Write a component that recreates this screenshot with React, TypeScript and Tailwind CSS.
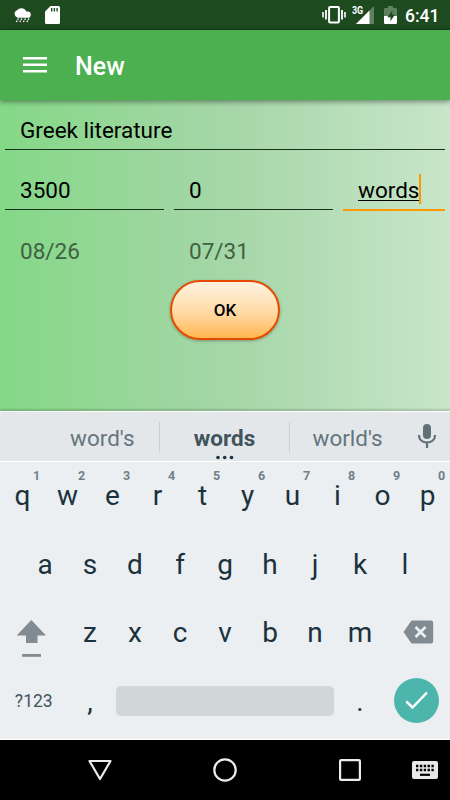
import type React from "react"

import { useState } from "react"

interface KeyProps {
  label: string
  hint?: string
}

const topRow = ["q", "w", "e", "r", "t", "y", "u", "i", "o", "p"]
const middleRow = ["a", "s", "d", "f", "g", "h", "j", "k", "l"]
const bottomRow = ["z", "x", "c", "v", "b", "n", "m"]

function StatusBar() {
  return (
    <div className="flex h-[30px] items-center border-b border-[#173d19] bg-[#1e4a20] text-white">
      <svg className="ml-[13px]" width="19" height="30" viewBox="0 0 19 30" fill="currentColor">
        <path d="M4.500 17.800a4 4 0 0 1-.3-7.600C5 9.300 5.900 8.200 8.300 8.200c2.700 0 4.500 1.500 5 3.400h1.400a3.100 3.100 0 0 1 0 6.200z" />
        <path d="M5.500 18.500l-2.200 3.500M9 18.500l-2.200 3.500M12.500 18.500l-2.200 3.500M16 18.500l-2.200 3.500" stroke="currentColor" strokeWidth="1.300" strokeDasharray="1.700 .7" />
      </svg>
      <svg className="ml-[13px]" width="15" height="30" viewBox="0 0 15 30">
        <path d="M5.500 6H13.500a1.500 1.500 0 0 1 1.500 1.500v15a1.500 1.500 0 0 1-1.500 1.500h-12A1.500 1.500 0 0 1 0 22.500V11.500z" fill="#fff" />
        <path d="M6.700 8v3.500M9.400 8v3.500M12.100 8v3.500" stroke="#1e4a20" strokeWidth="1.400" />
      </svg>
      <div className="ml-auto flex items-center">
        <svg width="24" height="30" viewBox="0 0 24 30" fill="none" stroke="currentColor">
          <rect x="7.100" y="7.100" width="9.800" height="15.300" rx="1" strokeWidth="2" />
          <path d="M4 10v9.500M20 10v9.500" strokeWidth="1.800" />
          <path d="M1 12v5.500M23 12v5.500" strokeWidth="1.600" />
        </svg>
        <div className="relative ml-[6px] h-[30px] w-[22px]">
          <svg width="22" height="30" viewBox="0 0 22 30">
            <path d="M22 6v18H4z" fill="#60815f" />
            <path d="M17.500 10.500V24H4z" fill="#fff" />
          </svg>
          <span className="absolute left-0 top-[5px] origin-left scale-x-[0.85] bg-[#1e4a20] text-[10.5px] font-bold leading-[11px]">
            3G
          </span>
        </div>
        <svg className="ml-[10px]" width="13" height="30" viewBox="0 0 13 30">
          <path d="M4 6h5v2h2.800A1.200 1.200 0 0 1 13 9.200V16H0V9.200A1.200 1.200 0 0 1 1.200 8H4z" fill="#60815f" />
          <path d="M0 16h13v6.800a1.200 1.200 0 0 1-1.200 1.200H1.200A1.200 1.200 0 0 1 0 22.800z" fill="#fff" />
          <path d="M8.500 10.500L3.200 17.200h3.300v4l4.500-6.700H8z" fill="#1e4a20" />
        </svg>
        <span className="ml-[8px] mr-[11px] w-[34px] whitespace-nowrap pt-[2px] text-[17.5px] font-medium leading-[28px]">6:41</span>
      </div>
    </div>
  )
}

function AppBar() {
  return (
    <header className="relative flex h-[70px] items-center bg-[#4caf50] pl-[23px] text-white shadow-[0_2px_5px_rgba(0,0,0,0.4)]">
      <svg width="24" height="18" viewBox="0 0 24 18" fill="currentColor">
        <path d="M0 1h24v2.500H0zM0 7.500h24V10H0zM0 14h24v2.500H0z" />
      </svg>
      <h1 className="ml-[28px] pt-[4px] text-[25px] font-medium leading-[30px]">New</h1>
    </header>
  )
}

function Field({ value, onChange, label }: { value: string; onChange: (value: string) => void; label: string }) {
  return (
    <input
      aria-label={label}
      className="block h-[35px] w-full min-w-0 border-b border-[#17301a] bg-transparent pb-[4px] pl-[15px] text-[22.5px] leading-[30px] text-black outline-none"
      value={value}
      onChange={(e) => onChange(e.target.value)}
    />
  )
}

function Key({ label, hint }: KeyProps) {
  return (
    <button type="button" className="relative h-full w-[45px] text-[28px] leading-[66px] text-[#1b323c]">
      {label}
      {hint && (
        <span className="absolute left-[27px] top-[6px] w-[19px] text-center text-[12.5px] font-bold leading-[15px] text-[#718086]">
          {hint}
        </span>
      )}
    </button>
  )
}

function KeyRow({ children }: { children: React.ReactNode }) {
  return <div className="flex h-[68.5px] justify-center">{children}</div>
}

function Suggestions() {
  return (
    <div className="flex h-[51px] items-center border-b border-t border-b-white border-t-white bg-[#e3e7ea] text-[22.5px] text-[#65757c]">
      <span className="w-[159px] pl-[70px] pt-[2px] leading-[30px]">word's</span>
      <div className="relative flex h-[30px] w-[131px] items-center justify-center border-x border-[#cbd0d3] font-bold text-[#41545c]">
        <span className="pt-[2px] leading-[30px]">words</span>
        <svg className="absolute left-[56px] top-[33px]" width="18" height="5" viewBox="0 0 18 5" fill="#1b323c">
          <circle cx="2" cy="2.500" r="1.800" />
          <circle cx="8.700" cy="2.500" r="1.800" />
          <circle cx="15.500" cy="2.500" r="1.800" />
        </svg>
      </div>
      <span className="ml-[22.5px] pt-[2px] leading-[30px]">world's</span>
      <svg className="-mt-px ml-auto mr-[13px]" width="20" height="26" viewBox="0 0 20 26">
        <rect x="6" y="1" width="8" height="15" rx="4" fill="#5f7077" />
        <path d="M2 12c0 4.700 3.500 7.500 8 7.500s8-2.800 8-7.500M10 19.500V25" fill="none" stroke="#5f7077" strokeWidth="2.200" />
      </svg>
    </div>
  )
}

function Keyboard() {
  return (
    <div className="relative bg-[#ebeff2] shadow-[0_-1px_3px_rgba(0,0,0,0.25)]">
      <Suggestions />
      <div className="h-[278px] border-b border-white">
        <KeyRow>
          {topRow.map((key, i) => (
            <Key key={key} label={key} hint={String((i + 1) % 10)} />
          ))}
        </KeyRow>
        <KeyRow>
          {middleRow.map((key) => (
            <Key key={key} label={key} />
          ))}
        </KeyRow>
        <KeyRow>
          <button type="button" aria-label="Shift" className="w-[67.5px] pl-[16px] pt-[10px]">
            <svg width="31" height="38" viewBox="0 0 31 38" fill="#808c91">
              <path d="M15.300 1L30 16.500h-8.500V24H10v-7.500H.7z" />
              <path d="M6 35h19v2.800H6z" />
            </svg>
          </button>
          {bottomRow.map((key) => (
            <Key key={key} label={key} />
          ))}
          <button type="button" aria-label="Delete" className="w-[67.5px] pb-[2px] pl-[20px]">
            <svg width="31" height="24" viewBox="0 0 31 24">
              <path d="M8.500 .5H28a2.200 2.200 0 0 1 2.200 2.200v18.600a2.200 2.200 0 0 1-2.200 2.200H8.500L.5 12z" fill="#808c91" />
              <path d="M12.500 7l10 10M22.500 7l-10 10" stroke="#ebeff2" strokeWidth="2.600" />
            </svg>
          </button>
        </KeyRow>
        <KeyRow>
          <button type="button" className="w-[67.5px] pb-[2px] text-[17.5px] leading-[66px] text-[#41545c]">
            ?123
          </button>
          <Key label="," />
          <div className="flex w-[225px] items-center justify-center pb-[2px]">
            <div className="h-[30px] w-[218px] rounded-[5px] bg-[#d1d6d9]" />
          </div>
          <Key label="." />
          <button type="button" aria-label="Done" className="flex w-[67.5px] items-center pb-[2px] pl-[11px]">
            <svg width="45" height="45" viewBox="0 0 45 45">
              <circle cx="22.500" cy="22.500" r="22.500" fill="#4db6ac" />
              <path d="M12.300 23.300l6.200 6.200L33 14.500" fill="none" stroke="#fff" strokeWidth="2.500" />
            </svg>
          </button>
        </KeyRow>
      </div>
    </div>
  )
}

function NavBar() {
  return (
    <nav className="flex h-[60px] items-center bg-black pl-[88px] text-[#ececec]">
      <svg width="24" height="22" viewBox="0 0 24 22" fill="none" stroke="currentColor" strokeWidth="2.200" strokeLinejoin="round">
        <path d="M1.500 2h21L12 20z" />
      </svg>
      <svg className="ml-[101px]" width="24" height="24" viewBox="0 0 24 24" fill="none" stroke="currentColor" strokeWidth="2.200">
        <circle cx="12" cy="12" r="10.700" />
      </svg>
      <svg className="ml-[102px]" width="22" height="22" viewBox="0 0 22 22" fill="none" stroke="currentColor" strokeWidth="2.200">
        <rect x="1.100" y="1.100" width="19.800" height="19.800" rx="1" />
      </svg>
      <svg className="ml-[51px]" width="26" height="18" viewBox="0 0 26 18">
        <rect width="26" height="18" rx="2" fill="#e8e8e8" />
        <path d="M4 5h18.500M4 9h18.500" stroke="#000" strokeWidth="2.400" strokeDasharray="2.400 1.450" />
        <path d="M8 13.800h10" stroke="#000" strokeWidth="2.200" />
      </svg>
    </nav>
  )
}

export default function App() {
  const [title, setTitle] = useState("Greek literature")
  const [target, setTarget] = useState("3500")
  const [progress, setProgress] = useState("0")

  return (
    <div className="flex h-[800px] w-[450px] flex-col overflow-hidden font-['Roboto',sans-serif]">
      <StatusBar />
      <AppBar />

      <main className="flex h-[311px] flex-col bg-gradient-to-r from-[#84d887] via-[#a5d6a7] to-[#c8e6c9] px-[5px] pt-[15px]">
        <Field label="Title" value={title} onChange={setTitle} />
        <div className="mt-[25px] grid grid-cols-[159px_159px_102px] gap-x-[10px]">
          <Field label="Target" value={target} onChange={setTarget} />
          <Field label="Progress" value={progress} onChange={setProgress} />
          <div className="flex h-[36px] border-b-2 border-[#ff9800] pl-[15px] text-[22.5px] leading-[30px]">
            <span className="underline decoration-1 underline-offset-2">words</span>
            <span className="-mt-px h-[30px] w-[2px] bg-[#ff9800]" />
          </div>
        </div>
        <div className="mt-[25px] grid grid-cols-[159px_159px] gap-x-[10px] pl-[15px] text-[22.5px] leading-[30px] text-[#3f6142]">
          <span>08/26</span>
          <span>07/31</span>
        </div>
        <button
          type="button"
          className="mt-[14px] h-[60px] w-[110px] self-center rounded-full border-2 border-[#e64a00] bg-gradient-to-b from-[#fff3e0] via-[#ffdcab] to-[#ffb74d] pt-[2px] text-[17px] font-medium text-black shadow-[0_1px_3px_rgba(0,0,0,0.3)]"
        >
          OK
        </button>
      </main>

      <Keyboard />
      <NavBar />
    </div>
  )
}
